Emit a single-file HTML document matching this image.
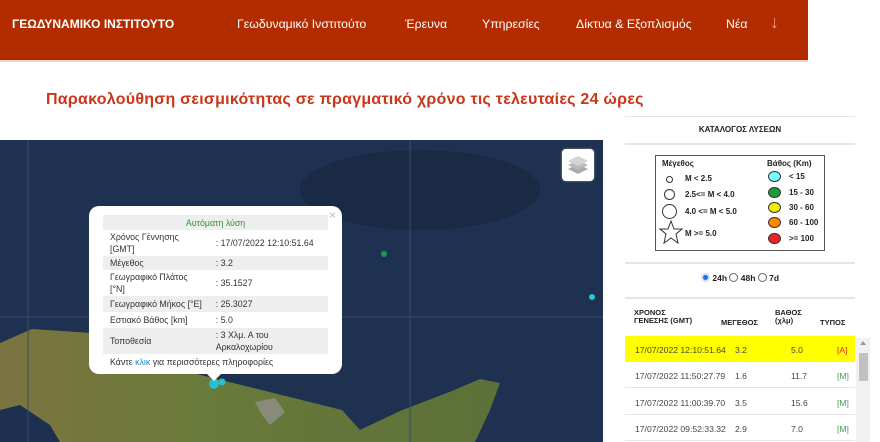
<!DOCTYPE html>
<html><head><meta charset="utf-8"><style>
*{margin:0;padding:0;box-sizing:border-box}
body{width:880px;height:442px;overflow:hidden;background:#fff;font-family:"Liberation Sans",sans-serif;position:relative}
.hdr{position:absolute;left:0;top:0;width:808px;height:60px;background:#b22c00;color:#fff;font-size:12.3px}
.hdr span{position:absolute;top:17px;white-space:nowrap}
.title{position:absolute;left:46px;top:91px;color:#c8361b;font-size:16px;font-weight:bold;letter-spacing:.25px;white-space:nowrap}
.map{position:absolute;left:0;top:140px;width:603px;height:302px;background:#1e3150;overflow:hidden}
.pop{position:absolute;left:89px;top:206px;width:253px;height:168px;background:#fff;border-radius:10px;font-size:8.8px;color:#333}
.pop table{position:absolute;left:14px;top:9px;width:225px;border-collapse:collapse}
.pop td{padding:1px 7px;line-height:12px;vertical-align:middle;white-space:nowrap}
.pop tr.g td{background:#eee}
.line{position:absolute;left:625px;width:230px;height:2px;background:#e5e5e5}
.leg{position:absolute;left:655px;top:155px;width:170px;height:96px;border:1.5px solid #555;font-size:8px;font-weight:bold;color:#222}
.leg div{position:absolute;white-space:nowrap}
.c{border:1px solid #333;border-radius:50%}
.row{position:absolute;left:625px;width:230px;height:26px;border-bottom:1px solid #e5e5e5;font-size:8.6px;color:#444}
.row span{position:absolute;top:9px}
</style></head><body>
<div class="hdr">
<span style="left:12px;font-weight:bold;font-size:12px">ΓΕΩΔΥΝΑΜΙΚΟ ΙΝΣΤΙΤΟΥΤΟ</span>
<span style="left:237px">Γεωδυναμικό Ινστιτούτο</span>
<span style="left:405px">Έρευνα</span>
<span style="left:482px">Υπηρεσίες</span>
<span style="left:576px">Δίκτυα &amp; Εξοπλισμός</span>
<span style="left:726px">Νέα</span>
<span style="left:770px;top:12px;font-size:18px;color:#f0a080">↓</span>
</div>
<div style="position:absolute;left:0;top:60px;width:808px;height:2px;background:#f3d5cc"></div>
<div class="title">Παρακολούθηση σεισμικότητας σε πραγματικό χρόνο τις τελευταίες 24 ώρες</div>
<div class="map">
<svg width="603" height="302" style="position:absolute;left:0;top:0">
<defs><linearGradient id="l" x1="0" y1="0" x2="1" y2="0"><stop offset="0" stop-color="#7c7440"/><stop offset=".4" stop-color="#6a7a3a"/><stop offset="1" stop-color="#5c7038"/></linearGradient></defs>
<ellipse cx="420" cy="50" rx="120" ry="40" fill="#1a2a45"/>
<path d="M0 203 L32 189 L92 193 L100 210 L342 270 L360 290 L400 271 L452 251 L480 239 L500 243 L490 270 L475 302 L60 302 L30 297 L0 300 Z" fill="url(#l)"/>
<path d="M0 270 L20 265 L50 285 L60 302 L0 302Z" fill="#1e3050"/>
<path d="M255 262 L275 258 L285 272 L270 285 L262 275Z" fill="#8a8a7a"/>
<line x1="0" y1="177" x2="603" y2="177" stroke="#3a4a66" stroke-width="1"/>
<line x1="410" y1="0" x2="410" y2="302" stroke="#3a4a66" stroke-width="1"/>
<line x1="28" y1="0" x2="28" y2="302" stroke="#3a4a66" stroke-width="1"/>
<circle cx="384" cy="114" r="3" fill="#1a9a48"/>
<circle cx="592" cy="157" r="3" fill="#28c8d8"/>
<circle cx="214" cy="244" r="5" fill="#28c0d0"/>
<circle cx="222" cy="242" r="3.5" fill="#28c0d0"/>
</svg>
<div style="position:absolute;left:562px;top:9px;width:32px;height:32px;background:#fff;border-radius:4px;box-shadow:0 0 2px #999">
<svg width="32" height="32"><path d="M6 20 L16 25 L26 20 L16 15Z" fill="#aaa"/><path d="M6 16 L16 21 L26 16 L16 11Z" fill="#bbb"/><path d="M6 12 L16 17 L26 12 L16 7Z" fill="#d4d4d4"/></svg></div>
</div>
<div class="pop">
<span style="position:absolute;right:6px;top:2px;color:#bbb;font-size:12px">×</span>
<table>
<tr class="g"><td colspan="2" style="text-align:center;color:#2a9a2a;height:15px">Αυτόματη λύση</td></tr>
<tr><td style="width:104px;white-space:normal">Χρόνος Γέννησης [GMT]</td><td>: 17/07/2022 12:10:51.64</td></tr>
<tr class="g"><td>Μέγεθος</td><td>: 3.2</td></tr>
<tr><td style="white-space:normal">Γεωγραφικό Πλάτος [°N]</td><td>: 35.1527</td></tr>
<tr class="g"><td style="height:16px">Γεωγραφικό Μήκος [°E]</td><td>: 25.3027</td></tr>
<tr><td style="height:16px">Εστιακό Βάθος [km]</td><td>: 5.0</td></tr>
<tr class="g"><td>Τοποθεσία</td><td style="white-space:normal">: 3 Χλμ. Α του Αρκαλοχωρίου</td></tr>
<tr><td colspan="2" style="height:16px">Κάντε <span style="color:#1a8ac8">κλικ</span> για περισσότερες πληροφορίες</td></tr>
</table>
</div>
<div style="position:absolute;left:207px;top:374px;width:0;height:0;border-left:7px solid transparent;border-right:7px solid transparent;border-top:7px solid #fff"></div>
<div class="line" style="top:116px;height:1px"></div>
<div style="position:absolute;left:625px;top:125px;width:230px;text-align:center;font-size:8px;font-weight:bold;color:#222">ΚΑΤΑΛΟΓΟΣ ΛΥΣΕΩΝ</div>
<div class="line" style="top:143px"></div>
<div class="leg">
<div style="left:6px;top:3px">Μέγεθος</div>
<div class="c" style="left:10px;top:20px;width:7px;height:7px"></div><div style="left:29px;top:18px">M &lt; 2.5</div>
<div class="c" style="left:8px;top:33px;width:11px;height:11px"></div><div style="left:29px;top:34px">2.5&lt;= M &lt; 4.0</div>
<div class="c" style="left:6px;top:48px;width:15px;height:15px"></div><div style="left:29px;top:51px">4.0 &lt;= M &lt; 5.0</div>
<svg style="position:absolute;left:3px;top:64px" width="24" height="24"><path d="M12 1 L15 9 L23 9 L17 14 L19 23 L12 18 L5 23 L7 14 L1 9 L9 9Z" fill="none" stroke="#333"/></svg>
<div style="left:29px;top:73px">M &gt;= 5.0</div>
<div style="left:111px;top:3px">Βάθος (Km)</div>
<div class="c" style="left:112px;top:15px;width:13px;height:11px;background:#7ff"></div><div style="left:133px;top:16px">&lt; 15</div>
<div class="c" style="left:112px;top:31px;width:13px;height:11px;background:#1a9a3a"></div><div style="left:133px;top:32px">15 - 30</div>
<div class="c" style="left:112px;top:46px;width:13px;height:11px;background:#ee0"></div><div style="left:133px;top:47px">30 - 60</div>
<div class="c" style="left:112px;top:61px;width:13px;height:11px;background:#f80"></div><div style="left:133px;top:62px">60 - 100</div>
<div class="c" style="left:112px;top:77px;width:13px;height:11px;background:#e22"></div><div style="left:133px;top:78px">&gt;= 100</div>
</div>
<div class="line" style="top:262px"></div>
<div style="position:absolute;left:701px;top:273px;font-size:8.5px;font-weight:bold;color:#222">
<span style="display:inline-block;width:9px;height:9px;border-radius:50%;background:#1a73e8;border:2px solid #cfe0fb;vertical-align:-1px"></span> 24h <span style="display:inline-block;width:9px;height:9px;border-radius:50%;border:1px solid #666;vertical-align:-1px"></span> 48h <span style="display:inline-block;width:9px;height:9px;border-radius:50%;border:1px solid #666;vertical-align:-1px"></span> 7d</div>
<div class="line" style="top:297px"></div>
<div style="position:absolute;left:634px;top:309px;font-size:7.5px;font-weight:bold;color:#222;line-height:8px">ΧΡΟΝΟΣ<br>ΓΕΝΕΣΗΣ (GMT)</div>
<div style="position:absolute;left:721px;top:318px;font-size:7.5px;font-weight:bold;color:#222">ΜΕΓΕΘΟΣ</div>
<div style="position:absolute;left:775px;top:309px;font-size:7.5px;font-weight:bold;color:#222;line-height:8px">ΒΑΘΟΣ<br>(χλμ)</div>
<div style="position:absolute;left:820px;top:318px;font-size:7.5px;font-weight:bold;color:#222">ΤΥΠΟΣ</div>
<div class="row" style="top:336px;background:#ff0;border-bottom:none"><span style="left:10px">17/07/2022 12:10:51.64</span><span style="left:110px">3.2</span><span style="left:166px">5.0</span><span style="left:212px;color:#e22">[A]</span></div>
<div class="row" style="top:362px"><span style="left:10px">17/07/2022 11:50:27.79</span><span style="left:110px">1.6</span><span style="left:166px">11.7</span><span style="left:212px;color:#4a9a4a">[M]</span></div>
<div class="row" style="top:389px"><span style="left:10px">17/07/2022 11:00:39.70</span><span style="left:110px">3.5</span><span style="left:166px">15.6</span><span style="left:212px;color:#4a9a4a">[M]</span></div>
<div class="row" style="top:415px"><span style="left:10px">17/07/2022 09:52:33.32</span><span style="left:110px">2.9</span><span style="left:166px">7.0</span><span style="left:212px;color:#4a9a4a">[M]</span></div>
<div style="position:absolute;left:856px;top:338px;width:14px;height:104px;background:#f1f1f1"></div>
<div style="position:absolute;left:859px;top:353px;width:9px;height:28px;background:#c1c1c1"></div>
<div style="position:absolute;left:860px;top:341px;width:0;height:0;border-left:3px solid transparent;border-right:3px solid transparent;border-bottom:4px solid #999"></div>
</body></html>
